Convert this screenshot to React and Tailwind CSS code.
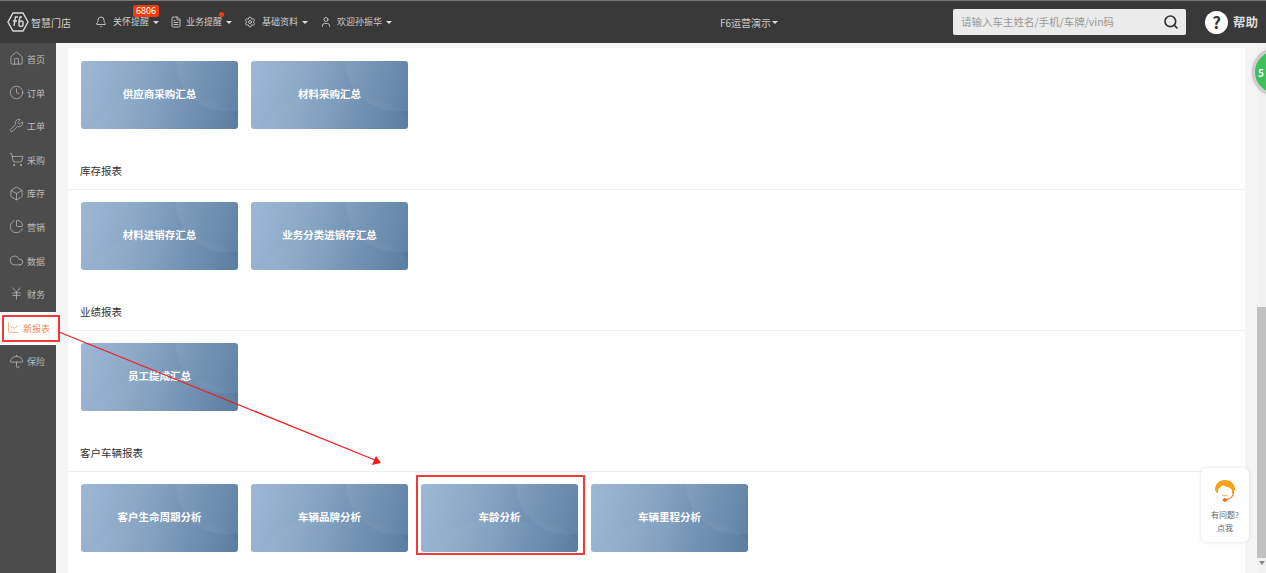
import { Bell, Box, Clock, Cloud, FileText, Home, JapaneseYen, LineChart, PieChart, Search, Settings, ShoppingCart, Umbrella, User, Wrench } from "lucide-react";

const FONT = "font-['Noto_Sans_CJK_SC','Liberation_Sans',sans-serif]";

const sideItems = [
  { label: "首页", icon: Home },
  { label: "订单", icon: Clock },
  { label: "工单", icon: Wrench },
  { label: "采购", icon: ShoppingCart },
  { label: "库存", icon: Box },
  { label: "营销", icon: PieChart },
  { label: "数据", icon: Cloud },
  { label: "财务", icon: JapaneseYen },
  { label: "新报表", icon: LineChart, active: true },
  { label: "保险", icon: Umbrella },
];

const navItems = [
  { label: "关怀提醒", icon: Bell, width: "w-[74px]", gap: "mr-[6px]", badge: "6806" },
  { label: "业务提醒", icon: FileText, width: "w-[73px]", gap: "mr-[4px]", dot: true },
  { label: "基础资料", icon: Settings, width: "w-[75px]", gap: "mr-[6px]" },
  { label: "欢迎孙振华", icon: User, width: "w-[80px]", gap: "mr-[5px]" },
];

const Caret = () => <span className="ml-1 h-0 w-0 border-x-[3px] border-t-[3px] border-x-transparent border-t-[#dddddd]" />;

const ReportCard = ({ title }) => (
  <div className="relative flex h-[68px] w-[157px] items-center justify-center overflow-hidden rounded-[3px] bg-[linear-gradient(105deg,#9db8d5_0%,#8aa7c6_35%,#557a9f_100%)] text-[10.5px] font-bold text-white">
    <div className="absolute -right-[62px] -top-[50px] h-[100px] w-[124px] rounded-full bg-white/5" />
    <div className="absolute -bottom-[70px] -right-[10px] h-[100px] w-[160px] rounded-full bg-white/[0.03]" />
    <span className="relative -translate-y-[1px]">{title}</span>
  </div>
);

const Section = ({ title, cards }) => (
  <section className="mt-[31px] first:mt-0">
    {title && (
      <h3 className="flex h-[30px] items-center border-b border-[#eeeeee] pb-[8px] pl-[12px] text-[10.5px] font-normal text-[#333333]">{title}</h3>
    )}
    <div className="mt-[12px] flex gap-[13px] pl-[13px]">
      {cards.map((card) => (
        <ReportCard key={card} title={card} />
      ))}
    </div>
  </section>
);

export default function App() {
  return (
    <div className={`relative flex h-[573px] w-[1266px] flex-col overflow-hidden bg-[#f5f5f5] ${FONT}`}>
      {/* Top bar */}
      <header className="flex h-[43px] shrink-0 items-center border-t border-[#777777] bg-[#393939] text-[#cccccc]">
        <div className="flex w-[95px] items-center pl-[7px]">
          <svg width="22" height="20" viewBox="0 0 22 20" fill="none" stroke="#d8d8d8" strokeWidth="1.4">
            <path d="M6 1h10l5 9-5 9H6L1 10z" />
            <path d="M11 5H8.500L7 14M6 9h4M15 5h-2l-1 4v3.500a2 2 0 0 0 4 0V11a1.700 1.700 0 0 0-3.500-.5" />
          </svg>
          <span className="ml-[2px] text-[10px] text-[#d0d0d0]">智慧门店</span>
        </div>
        <nav className="flex items-center gap-[1px]">
          {navItems.map((item) => (
            <div key={item.label} className={`relative flex items-center text-[9px] ${item.width}`}>
              <item.icon size={12} strokeWidth={1.8} className={`shrink-0 ${item.gap}`} />
              <span className="whitespace-nowrap">{item.label}</span>
              <Caret />
              {item.badge && (
                <span className="absolute left-[38px] -top-[10px] rounded-[2px] bg-[#f03c0a] px-[3px] text-[9px] leading-[12px] text-white">{item.badge}</span>
              )}
              {item.dot && <span className="absolute left-[49px] -top-[3px] h-[5px] w-[5px] rounded-full bg-[#f03c0a]" />}
            </div>
          ))}
        </nav>
        <div className="ml-[320px] flex w-[60px] items-center text-[10px] whitespace-nowrap">
          F6运营演示
          <span className="ml-[1px] h-0 w-0 border-x-[3px] border-t-[3px] border-x-transparent border-t-[#dddddd]" />
        </div>
        <div className="ml-[173px] flex h-[26px] w-[233px] items-center justify-between rounded-[2px] bg-[#ebebeb] pl-[8px] pr-[7px]">
          <span className="text-[10.5px] text-[#999999]">请输入车主姓名/手机/车牌/vin码</span>
          <Search size={16} strokeWidth={2.5} className="text-[#333333]" />
        </div>
        <div className="ml-[19px] flex h-[23px] w-[23px] items-center justify-center rounded-full bg-white text-[17px] font-bold text-[#393939]">?</div>
        <span className="ml-[5px] whitespace-nowrap text-[12.500px] font-bold text-[#dddddd]">帮助</span>
      </header>

      <div className="flex min-h-0 flex-1">
        {/* Sidebar */}
        <aside className="flex w-[56px] shrink-0 flex-col bg-[#4c4c4c]">
          {sideItems.map((item) => (
            <div
              key={item.label}
              className={`flex h-[33.600px] items-center whitespace-nowrap text-[9px] ${item.active ? "bg-white pl-[7px] text-[#f08a3c]" : "pl-[9px] text-[#bbbbbb]"}`}
            >
              <item.icon size={item.active ? 13 : 15} strokeWidth={1.2} className="mr-[3px] shrink-0 -translate-y-[1px]" />
              {item.label}
            </div>
          ))}
        </aside>

        {/* Main content */}
        <main className="ml-[12px] mt-[5px] w-[1177px] bg-white pt-[1px]">
          <Section cards={["供应商采购汇总", "材料采购汇总"]} />
          <Section title="库存报表" cards={["材料进销存汇总", "业务分类进销存汇总"]} />
          <Section title="业绩报表" cards={["员工提成汇总"]} />
          <Section title="客户车辆报表" cards={["客户生命周期分析", "车辆品牌分析", "车龄分析", "车辆里程分析"]} />
        </main>

        {/* Scrollbar */}
        <div className="ml-auto flex w-[9px] flex-col items-center bg-[#f1f1f1] pt-[264px]">
          <div className="h-[251px] w-full bg-[#c1c1c1]" />
          <span className="mt-[3px] h-0 w-0 border-x-[3px] border-t-[4px] border-x-transparent border-t-[#888888]" />
        </div>
      </div>

      {/* Floating green badge */}
      <div className="absolute left-[1253px] top-[49px] flex h-[46px] w-[46px] items-center rounded-full border-2 border-[#d0d0d0] bg-[#3fbf5c] pl-[3px] text-[10px] font-bold text-white shadow-[0_0_3px_rgba(0,0,0,0.5)]">
        5
      </div>

      {/* Help widget */}
      <div className="absolute left-[1201px] top-[468px] flex h-[74px] w-[48px] flex-col items-center rounded-[6px] bg-white pt-[11px] text-[8px] leading-[13px] text-[#666666] shadow-[0_0_4px_rgba(0,0,0,0.12)]">
        <svg width="24" height="24" viewBox="0 0 24 24" fill="none">
          <path d="M2 11C2 5 6 1 12 1s10 4 10 10l-2 3H4z" fill="#f9a11b" />
          <path d="M5 12c0-3 3-4 5-6 2 2 9 2 9 6 0 4-3 7-7 7s-7-3-7-7z" fill="#fff" />
          <path d="M20.500 13c0 4-3 7-7 7.500" stroke="#f26a1b" strokeWidth="1.200" />
          <ellipse cx="12" cy="21" rx="2.500" ry="1.800" fill="#f26a1b" />
          <path d="M9 16c2 1 4 1 6 0" stroke="#f9a11b" strokeWidth="0.800" />
        </svg>
        <span className="mt-[5px]">有问题?</span>
        <span>点我</span>
      </div>

      {/* Annotation boxes */}
      <div className="absolute left-[2px] top-[315px] h-[27px] w-[58px] border-2 border-[#f03a3a]" />
      <div className="absolute left-[416px] top-[475px] h-[80px] w-[169px] border-2 border-[#f03a3a]" />
      <svg className="absolute left-0 top-0" width="1266" height="573" fill="none">
        <path d="M59 332 375 460" stroke="#f01c1c" strokeWidth="1.200" />
        <path d="M381 463 372 465 376 456z" fill="#f01c1c" />
      </svg>
    </div>
  );
}
